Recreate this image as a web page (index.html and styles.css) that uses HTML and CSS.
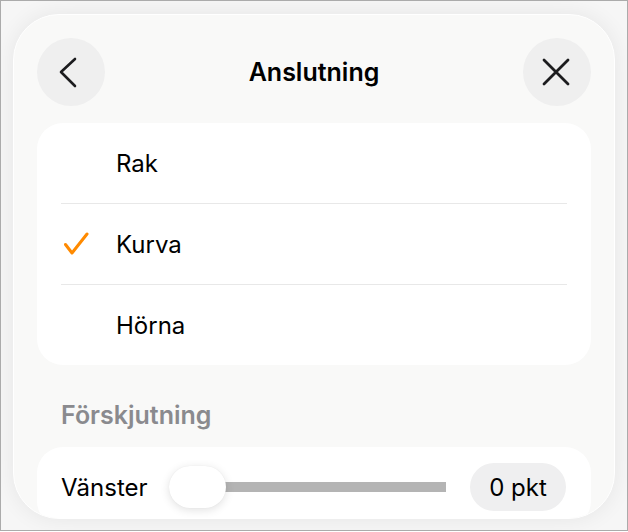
FILE: index.html
```html
<!DOCTYPE html>
<html lang="sv">
<head>
<meta charset="utf-8">
<title>Anslutning</title>
<link rel="stylesheet" href="styles.css">
</head>
<body>
<div class="frame">
  <div class="panel">
    <header class="hdr">
      <button class="circle" aria-label="Tillbaka">
        <svg width="68" height="68" viewBox="0 0 68 68"><path d="M38 21 L24 34 L38 48" fill="none" stroke="#1c1c1e" stroke-width="2.6" stroke-linecap="round" stroke-linejoin="round"/></svg>
      </button>
      <h1 class="title">Anslutning</h1>
      <button class="circle" aria-label="Stäng">
        <svg width="68" height="68" viewBox="0 0 68 68"><path d="M21 22 L45 46 M45 22 L21 46" fill="none" stroke="#1c1c1e" stroke-width="2.8" stroke-linecap="round"/></svg>
      </button>
    </header>

    <div class="card">
      <div class="row"><span class="check"></span><span class="label">Rak</span></div>
      <div class="sep"></div>
      <div class="row"><span class="check">
        <svg width="26" height="24" viewBox="0 0 26 24"><path d="M2.5 12.5 L9 21 L24 2" fill="none" stroke="#ff8a00" stroke-width="3" stroke-linecap="round" stroke-linejoin="round"/></svg>
      </span><span class="label">Kurva</span></div>
      <div class="sep"></div>
      <div class="row"><span class="check"></span><span class="label">Hörna</span></div>
    </div>

    <div class="section">Förskjutning</div>

    <div class="card card-slider">
      <div class="srow">
        <span class="slabel">Vänster</span>
        <div class="slider">
          <div class="track"></div>
          <div class="thumb"></div>
        </div>
        <span class="pill">0 pkt</span>
      </div>
    </div>
  </div>
</div>
</body>
</html>
```

FILE: styles.css
```css
* { box-sizing: border-box; }
html, body { margin: 0; padding: 0; background: #ffffff; }
body {
  font-family: Inter, "Noto Sans", "Liberation Sans", sans-serif;
  color: #000;
}
.frame {
  width: 628px;
  height: 531px;
  border: 1px solid #ababab;
  background: #f6f6f6;
  padding: 13px 0 0 12px;
  overflow: hidden;
}
.panel {
  width: 602px;
  height: 505px;
  border: 1px solid #ffffff;
  border-radius: 46px;
  background: #f9f9f8;
  box-shadow: 0 0 22px rgba(0, 0, 0, 0.07);
  padding: 23px 23px 0;
  overflow: hidden;
}
.hdr {
  display: flex;
  align-items: center;
  justify-content: space-between;
  height: 68px;
}
.circle {
  width: 68px;
  height: 68px;
  border-radius: 50%;
  border: 0;
  padding: 0;
  margin: 0;
  background: #efefef;
  display: flex;
  align-items: center;
  justify-content: center;
}
.circle svg { display: block; }
.title {
  margin: 0;
  font-size: 25px;
  font-weight: 600;
}
.card {
  margin-top: 17px;
  background: #ffffff;
  border-radius: 26px;
}
.row {
  height: 80px;
  display: flex;
  align-items: center;
  padding-left: 26px;
}
.check {
  width: 53px;
  display: flex;
  align-items: center;
}
.check svg { display: block; }
.label {
  font-size: 24px;
}
.sep {
  height: 1px;
  margin: 0 24px;
  background: #e8e8e8;
}
.section {
  padding: 36px 24px 18px;
  line-height: 28px;
  font-size: 25px;
  font-weight: 600;
  color: #8a8a8e;
}
.card-slider {
  margin-top: 0;
  height: 80px;
}
.srow {
  height: 80px;
  display: flex;
  align-items: center;
  padding: 0 24px;
}
.slabel {
  width: 108px;
  font-size: 24px;
}
.slider {
  position: relative;
  width: 277px;
  height: 42px;
}
.track {
  position: absolute;
  left: 20px;
  right: 0;
  top: 16px;
  height: 10px;
  background: #b4b4b4;
}
.thumb {
  position: absolute;
  left: 0;
  top: 0;
  width: 57px;
  height: 42px;
  border-radius: 21px;
  background: #ffffff;
  box-shadow: 0 2px 10px rgba(0, 0, 0, 0.12), 0 0 1px rgba(0, 0, 0, 0.08);
}
.pill {
  margin-left: 24px;
  width: 96px;
  height: 48px;
  border-radius: 24px;
  background: #efeff0;
  display: flex;
  align-items: center;
  justify-content: center;
  font-size: 24px;
}
```
